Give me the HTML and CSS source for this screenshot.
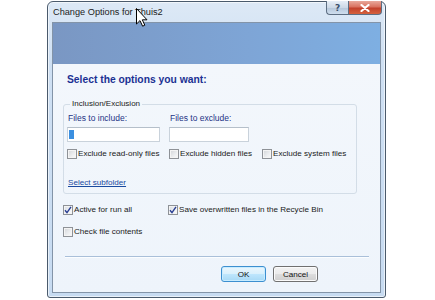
FILE: index.html
```html
<!DOCTYPE html>
<html>
<head>
<meta charset="utf-8">
<link rel="stylesheet" href="styles.css">
</head>
<body>
<div class="window">
  <div class="titlebar">
    <span class="title">Change Options for Thuis2</span>
    <div class="caption">
      <span class="cap-help">?</span>
      <span class="cap-close"><svg width="10" height="8" viewBox="0 0 10 8"><path d="M1.5 1 L8.5 7 M8.5 1 L1.5 7" stroke="#fff" stroke-width="2.2" stroke-linecap="round"/></svg></span>
    </div>
  </div>
  <div class="client">
    <div class="banner"></div>
    <div class="content">
      <div class="heading">Select the options you want:</div>
      <fieldset class="group">
        <legend class="legend">Inclusion/Exclusion</legend>
        <div class="fields">
          <div class="field field-inc">
            <span class="flabel">Files to include:</span>
            <div class="input input-inc"><span class="selmark"></span></div>
          </div>
          <div class="field field-exc">
            <span class="flabel">Files to exclude:</span>
            <div class="input input-exc"></div>
          </div>
        </div>
        <div class="checks">
          <label class="check c1"><span class="cb"></span><span>Exclude read-only files</span></label>
          <label class="check c2"><span class="cb"></span><span>Exclude hidden files</span></label>
          <label class="check c3"><span class="cb"></span><span>Exclude system files</span></label>
        </div>
        <a class="link">Select subfolder</a>
      </fieldset>
      <div class="opts">
        <label class="check o1"><span class="cb checked"><svg width="8" height="8" viewBox="0 0 8 8"><path d="M1 4.2 L3 6.6 L7 0.8" fill="none" stroke="#2a3f93" stroke-width="1.4"/></svg></span><span>Active for run all</span></label>
        <label class="check"><span class="cb checked"><svg width="8" height="8" viewBox="0 0 8 8"><path d="M1 4.2 L3 6.6 L7 0.8" fill="none" stroke="#2a3f93" stroke-width="1.4"/></svg></span><span>Save overwritten files in the Recycle Bin</span></label>
      </div>
      <div class="opts opts2">
        <label class="check"><span class="cb"></span><span>Check file contents</span></label>
      </div>
      <div class="sep"></div>
      <div class="buttons">
        <span class="btn btn-ok">OK</span>
        <span class="btn btn-cancel">Cancel</span>
      </div>
    </div>
  </div>
</div>
<svg class="cursor" width="12" height="19" viewBox="0 0 12 19"><path d="M0.5 0.5 L0.5 16 L4 12.6 L6.6 18.2 L8.8 17.2 L6.3 11.8 L11 11.8 Z" fill="#fff" stroke="#000" stroke-width="1"/></svg>
</body>
</html>
```
FILE: styles.css
```css
html, body { margin: 0; padding: 0; background: #fff; }
body { position: relative; width: 435px; height: 300px; overflow: hidden; font-family: "Liberation Sans", Arial, sans-serif; }

.window {
  margin: 1px 0 0 47px;
  width: 339px;
  height: 297px;
  box-sizing: border-box;
  border: 1px solid #4a5a6c;
  border-radius: 6px 6px 3px 3px;
  padding: 0 4px 4px 4px;
  background: linear-gradient(180deg, #dde9f6 0%, #cfe0f3 20%, #c7dbf1 100%);
  box-shadow: inset 0 0 0 1px rgba(255,255,255,0.6);
  display: flex;
  flex-direction: column;
}

.titlebar {
  height: 20px;
  display: flex;
  align-items: flex-start;
  justify-content: space-between;
}
.title {
  font-size: 9.2px;
  line-height: 12px;
  color: #1c1c1c;
  padding: 4px 0 0 1px;
}
.caption { display: flex; margin: -1px -1px 0 0; }
.cap-help, .cap-close {
  height: 14px;
  box-sizing: border-box;
  display: flex;
  align-items: center;
  justify-content: center;
  border: 1px solid #5d6e82;
  border-top: none;
}
.cap-help {
  width: 22px;
  border-radius: 0 0 0 4px;
  border-right: none;
  background: linear-gradient(180deg, #e6eef7 0%, #cdd9e7 50%, #b4c6da 51%, #cfdeee 100%);
  color: #394f6b;
  font-size: 9px;
  font-weight: bold;
  font-family: "DejaVu Sans", sans-serif;
}
.cap-close {
  width: 34px;
  border-radius: 0 0 4px 0;
  background: linear-gradient(180deg, #e9a99b 0%, #d9725f 45%, #c2412b 55%, #d5623e 100%);
}

.client {
  flex: 1;
  border: 1px solid #8394a8;
  display: flex;
  flex-direction: column;
  background: #eff5fc;
}
.banner {
  height: 41px;
  background: linear-gradient(90deg, #7a97c3 0%, #7ea5d6 60%, #7eafe2 100%);
}
.content {
  flex: 1;
  padding: 9px 0 0 0;
  background: linear-gradient(180deg, #f3f7fc 0%, #eef4fb 100%);
  display: flex;
  flex-direction: column;
}
.heading {
  font-weight: bold;
  font-size: 10.3px;
  line-height: 13px;
  color: #1b3193;
  padding-left: 14px;
}

.group {
  margin: 13px 0 0 10px;
  width: 294px;
  box-sizing: border-box;
  border: 1px solid #d3dde7;
  border-radius: 3px;
  padding: 4px 0 5px 3px;
  min-width: 0;
}
.legend {
  font-size: 8px;
  line-height: 10px;
  color: #222;
  padding: 0 2px;
  margin-left: 3px;
}
.fields { display: flex; gap: 9px; }
.field { display: flex; flex-direction: column; }
.flabel {
  font-size: 8.5px;
  line-height: 10px;
  color: #1e3486;
  padding-left: 1px;
  margin-bottom: 4px;
}
.input {
  height: 15px;
  box-sizing: border-box;
  background: #fff;
  border: 1px solid #c9d2db;
  border-top-color: #b5bfca;
  display: flex;
  align-items: center;
}
.input-inc { width: 93px; }
.input-exc { width: 80px; }
.selmark { width: 5px; height: 9px; margin-left: 1px; background: #3b8fe0; }

.checks { display: flex; margin-top: 7px; }
.check {
  display: flex;
  align-items: center;
  gap: 1px;
  font-size: 8.1px;
  line-height: 10px;
  color: #1a1a1a;
}
.checks .c1 { width: 102px; }
.checks .c2 { width: 93px; }
.cb {
  width: 10px;
  height: 10px;
  box-sizing: border-box;
  border: 1px solid #8e9297;
  background: linear-gradient(135deg, #d2d4d7 0%, #eceef0 60%, #fafafa 100%);
  box-shadow: inset 0 0 0 1px #f4f4f4;
  display: flex;
  align-items: center;
  justify-content: center;
  flex-shrink: 0;
}
.cb.checked { background: linear-gradient(135deg, #d9dde3 0%, #eef1f4 60%, #fbfbfb 100%); }
.link {
  margin: 19px 0 0 1px;
  font-size: 8.1px;
  line-height: 10px;
  color: #1a4aa0;
  text-decoration: underline;
  display: block;
}

.opts { display: flex; margin: 11px 0 0 10px; }
.opts .o1 { width: 105px; }
.opts2 { margin-top: 12px; }

.sep {
  margin: 19px 11px 0 12px;
  height: 1px;
  background: #a9bfd9;
  border-bottom: 1px solid #fbfdff;
}
.buttons {
  display: flex;
  gap: 7px;
  padding-left: 168px;
  margin-top: 8px;
}
.btn {
  height: 16px;
  width: 45px;
  box-sizing: border-box;
  border-radius: 3px;
  display: flex;
  align-items: center;
  justify-content: center;
  font-size: 8.1px;
  color: #111;
}
.btn-ok {
  border: 1px solid #3c8fd0;
  background: linear-gradient(180deg, #eaf6fd 0%, #d9f0fc 50%, #bee6fd 51%, #a7d9f5 100%);
  box-shadow: inset 0 0 0 1px #c8ecff;
}
.btn-cancel {
  border: 1px solid #707070;
  background: linear-gradient(180deg, #f2f2f2 0%, #ebebeb 50%, #dddddd 51%, #cfcfcf 100%);
  box-shadow: inset 0 0 0 1px #fbfbfb;
}

.cursor { position: absolute; left: 136px; top: 8px; }
```
